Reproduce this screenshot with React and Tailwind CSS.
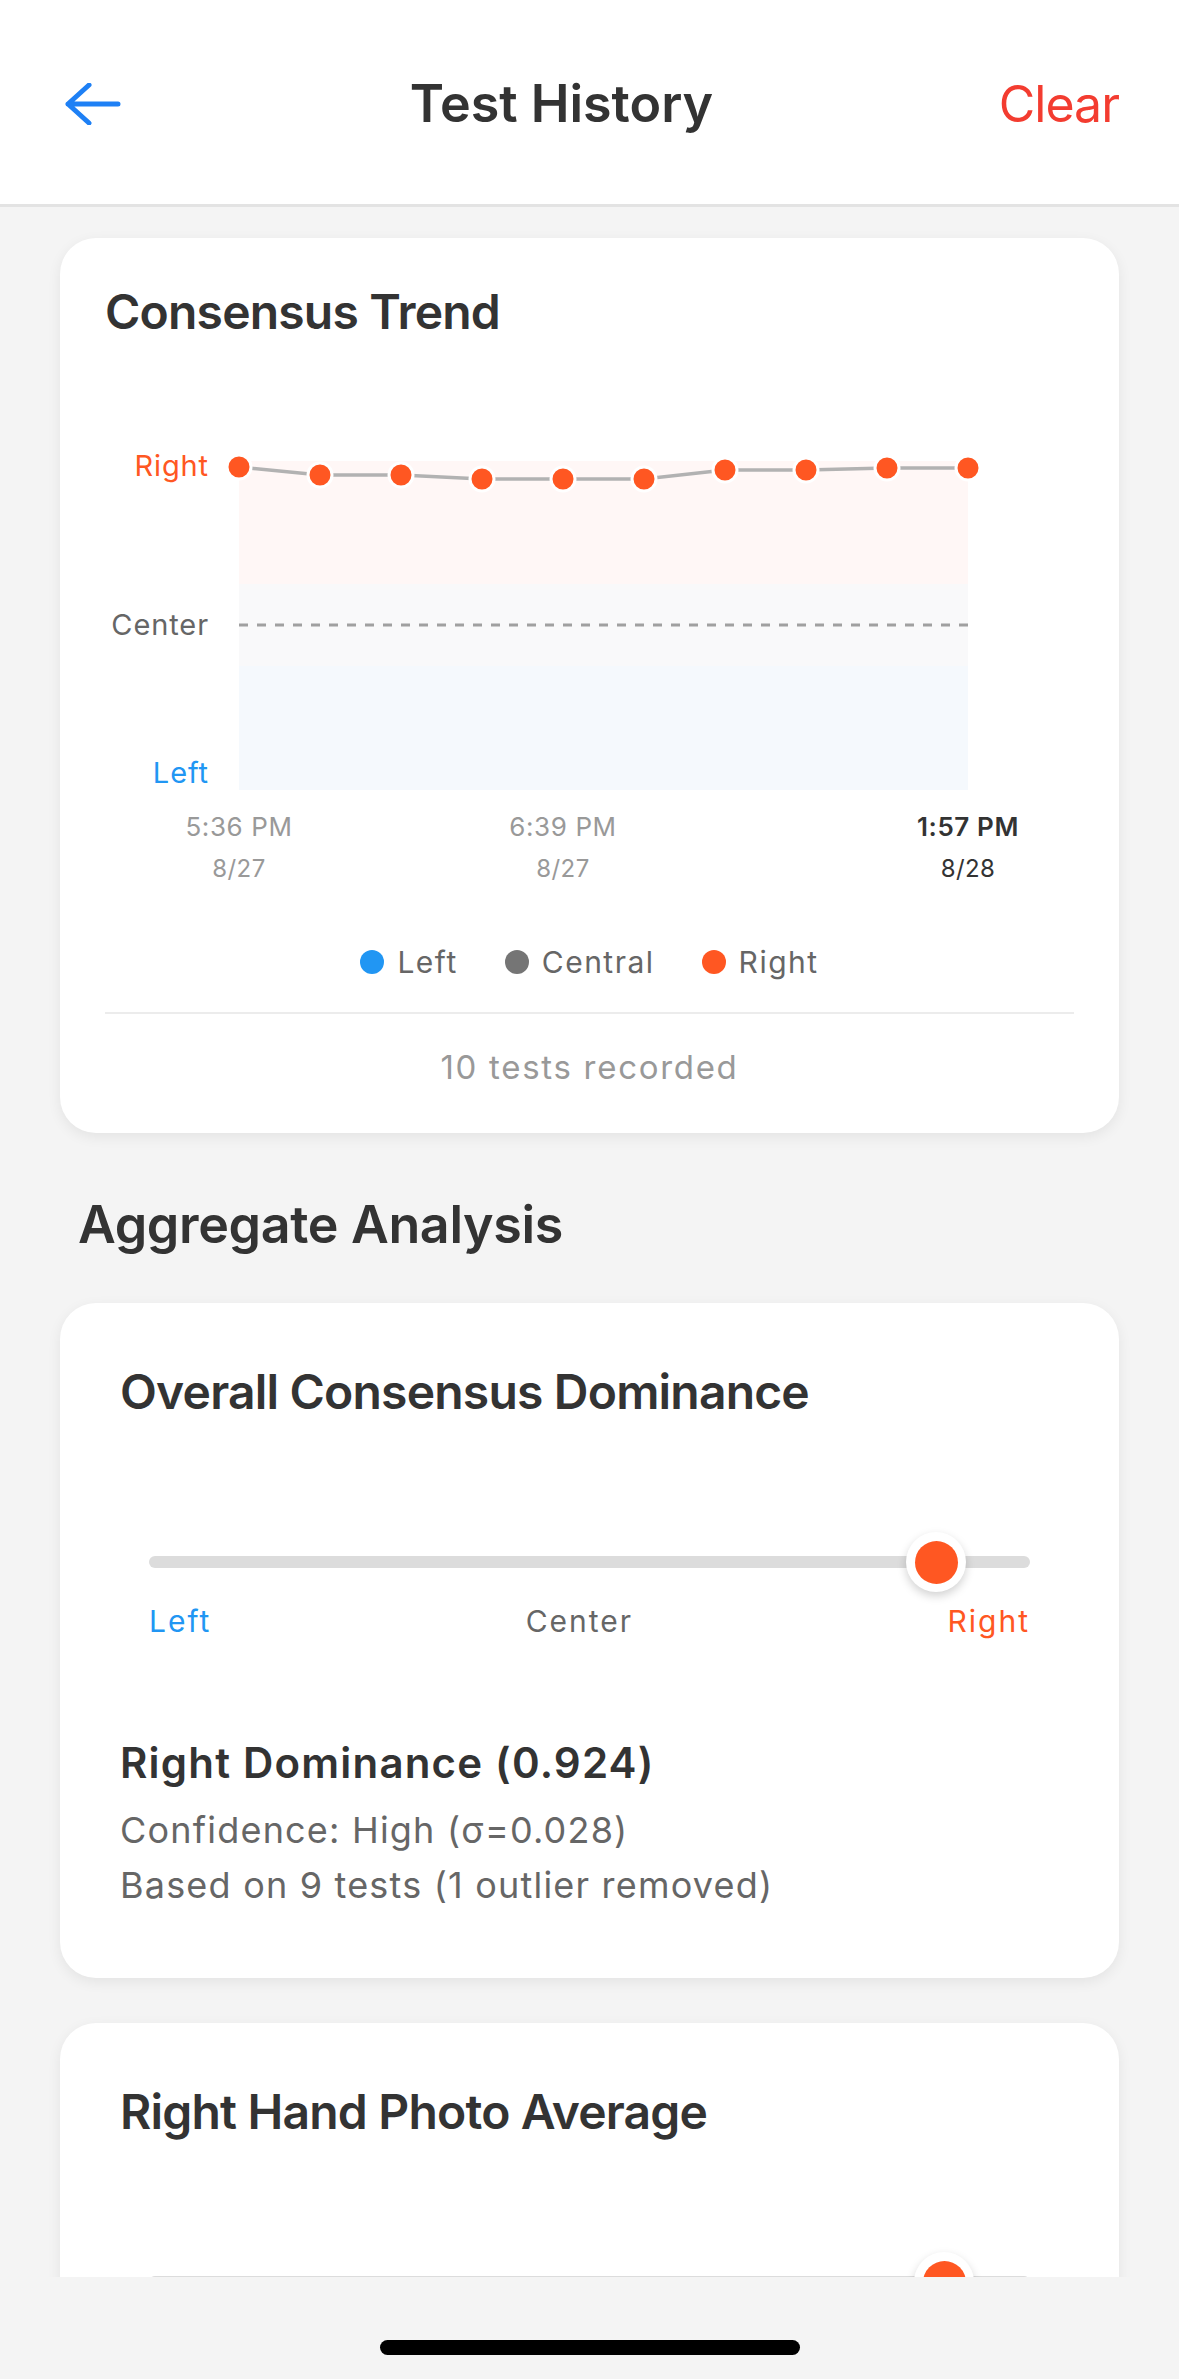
import React from 'react';

const FONT = "font-['Inter','Noto_Sans',sans-serif]";

// chart points (y in svg units, value space: 1 = 120, 0 = 284, -1 = 449)
const trend = [126, 134, 134, 138, 138, 138, 129, 129, 127, 127];
const ticks = [
  { i: 0, time: '5:36 PM', date: '8/27' },
  { i: 4, time: '6:39 PM', date: '8/27' },
  { i: 9, time: '1:57 PM', date: '8/28', latest: true },
];

function BackArrow() {
  return (
    <svg width="64" height="42" viewBox="0 0 64 42" fill="none">
      <path
        d="M8 21h50M29 2 8 21l21 19"
        stroke="#1e80f5"
        strokeWidth="5"
        strokeLinecap="round"
        strokeLinejoin="round"
      />
    </svg>
  );
}

function TrendChart() {
  const x = (i) => 134 + i * 81;
  const line = trend.map((y, i) => `${i === 0 ? 'M' : 'L'}${x(i)} ${y}`).join(' ');

  return (
    <svg width="968" height="550" viewBox="0 0 968 550" className="block">
      {/* zones */}
      <rect x="134" y="120" width="729" height="123" fill="#fff7f6" />
      <rect x="134" y="243" width="729" height="82" fill="#f9f9fa" />
      <rect x="134" y="325" width="729" height="124" fill="#f5f9fd" />

      <line x1="134" y1="284" x2="863" y2="284" stroke="#a0a0a0" strokeWidth="3" strokeDasharray="9 9" />

      <g fontFamily="Inter, 'Noto Sans', sans-serif" fontSize="29" letterSpacing="0.9" textAnchor="end">
        <text x="104" y="135" fill="#ff5722">Right</text>
        <text x="104" y="294" fill="#666666">Center</text>
        <text x="104" y="442" fill="#2196f3">Left</text>
      </g>

      <path d={line} stroke="#b2b2b2" strokeWidth="3.5" fill="none" />
      {trend.map((y, i) => (
        <circle key={i} cx={x(i)} cy={y} r="12" fill="#ff5722" stroke="#ffffff" strokeWidth="3" />
      ))}

      <g fontFamily="Inter, 'Noto Sans', sans-serif" textAnchor="middle">
        {ticks.map((t) => (
          <g key={t.i}>
            <text
              x={x(t.i)}
              y="495"
              fontSize="26"
              letterSpacing="0.6"
              fontWeight={t.latest ? 600 : 400}
              fill={t.latest ? '#333333' : '#999999'}
            >
              {t.time}
            </text>
            <text x={x(t.i)} y="536" fontSize="24" letterSpacing="0.4" fill={t.latest ? '#333333' : '#999999'}>
              {t.date}
            </text>
          </g>
        ))}
      </g>
    </svg>
  );
}

function LegendItem({ color, label }) {
  return (
    <div className="flex items-center gap-[13px]">
      <span className={`w-6 h-6 rounded-full ${color}`} />
      <span className="text-[30px] leading-[36px] tracking-[1.5px] text-[#666666]">{label}</span>
    </div>
  );
}

function DominanceSlider({ thumbLeft, showLabels = true }) {
  return (
    <div className="px-[29px]">
      <div className="relative h-[60px] flex items-center">
        <div className="h-3 w-full rounded-full bg-[#dcdcdc]" />
        <div
          className="absolute top-0 w-[60px] h-[60px] rounded-full bg-white flex items-center justify-center shadow-[0_4px_10px_rgba(0,0,0,0.18)]"
          style={{ left: thumbLeft }}
        >
          <div className="w-[43px] h-[43px] rounded-full bg-[#ff5722]" />
        </div>
      </div>
      {showLabels && (
        <div className="mt-[11px] flex justify-between text-[30px] leading-[36px] tracking-[2px]">
          <span className="text-[#2196f3]">Left</span>
          <span className="text-[#666666]">Center</span>
          <span className="text-[#ff5722]">Right</span>
        </div>
      )}
    </div>
  );
}

export default function App() {
  return (
    <div className={`w-[1179px] h-[2379px] bg-[#f4f4f4] flex flex-col overflow-hidden text-[#333333] ${FONT}`}>
      {/* Header */}
      <header className="h-[207px] shrink-0 bg-white border-b-[3px] border-[#e3e3e3]">
        <div className="mt-[64px] h-[80px] px-[60px] flex items-center justify-between">
          <button className="w-[64px] h-[42px] flex items-center">
            <BackArrow />
          </button>
          <h1 className="text-[52px] leading-[62px] font-semibold text-[#333333]">Test History</h1>
          <button className="text-[50px] leading-[62px] tracking-[-1px] text-[#f33c30]">Clear</button>
        </div>
      </header>

      {/* Scroll content */}
      <main className="flex-1 overflow-hidden px-[60px] pt-[31px]">
        {/* Trend card */}
        <section className="rounded-[36px] bg-white px-[45px] pt-[45px] pb-[46px] shadow-[0_4px_14px_rgba(0,0,0,0.07)]">
          <h2 className="text-[48px] leading-[58px] font-semibold tracking-[-0.8px]">Consensus Trend</h2>
          <TrendChart />
          <div className="mt-[53px] flex items-center justify-center gap-[47px]">
            <LegendItem color="bg-[#2196f3]" label="Left" />
            <LegendItem color="bg-[#757575]" label="Central" />
            <LegendItem color="bg-[#ff5722]" label="Right" />
          </div>
          <div className="mt-[32px] h-[2px] bg-[#ececec]" />
          <p className="mt-[33px] text-center text-[33px] leading-[40px] tracking-[1.7px] text-[#999999]">
            10 tests recorded
          </p>
        </section>

        <h2 className="mt-[61px] pl-[18px] text-[52px] leading-[62px] font-semibold tracking-[-0.35px]">
          Aggregate Analysis
        </h2>

        {/* Overall dominance */}
        <section className="mt-[47px] rounded-[36px] bg-white px-[60px] pt-[60px] pb-[65px] shadow-[0_4px_14px_rgba(0,0,0,0.07)]">
          <h3 className="text-[48px] leading-[58px] font-semibold tracking-[-0.8px]">Overall Consensus Dominance</h3>
          <div className="mt-[111px]">
            <DominanceSlider thumbLeft={757} />
          </div>
          <p className="mt-[99px] text-[42px] leading-[50px] font-semibold tracking-[1.2px]">Right Dominance (0.924)</p>
          <p className="mt-[15px] text-[36px] leading-[55px] tracking-[1.2px] text-[#666666]">
            Confidence: High (σ=0.028)
          </p>
          <p className="text-[36px] leading-[55px] tracking-[1.2px] text-[#666666]">
            Based on 9 tests (1 outlier removed)
          </p>
        </section>

        {/* Right hand photo */}
        <section className="mt-[45px] rounded-[36px] bg-white px-[60px] pt-[60px] pb-[65px] shadow-[0_4px_14px_rgba(0,0,0,0.07)]">
          <h3 className="text-[48px] leading-[58px] font-semibold tracking-[-0.8px]">Right Hand Photo Average</h3>
          <div className="mt-[111px]">
            <DominanceSlider thumbLeft={765} showLabels={false} />
          </div>
        </section>
      </main>

      {/* Home indicator */}
      <div className="h-[102px] shrink-0 flex justify-center">
        <div className="mt-[63px] w-[420px] h-[15px] rounded-full bg-black" />
      </div>
    </div>
  );
}
